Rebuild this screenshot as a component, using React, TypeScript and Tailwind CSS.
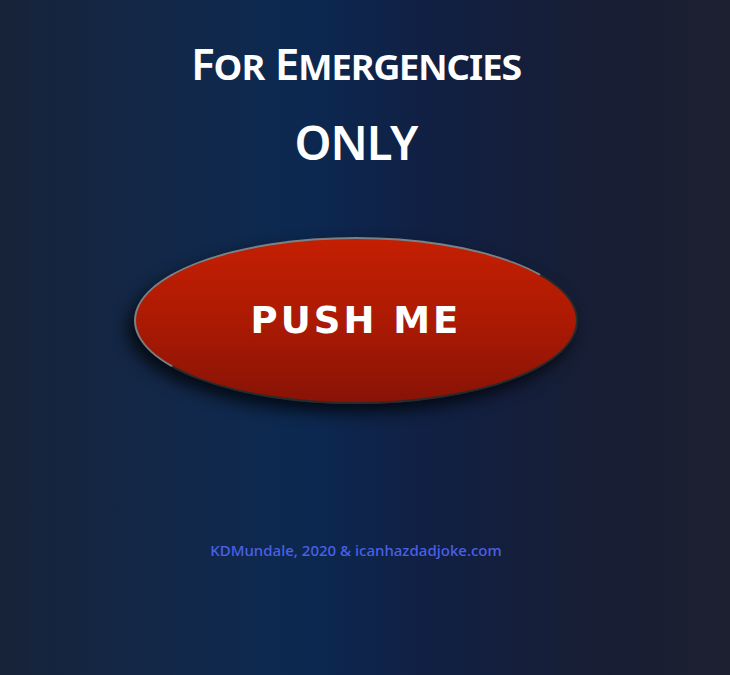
export default function App() {
  return (
    <div
      className="min-h-[675px] w-full pr-[18px] flex flex-col items-center bg-[linear-gradient(90deg,#172339_0%,#12284a_25%,#0c2850_42%,#111f42_60%,#171e35_80%,#1c2031_100%)]"
      style={{ fontFamily: '"Noto Sans", "Open Sans", sans-serif' }}
    >
      <h1 className="mt-[33px] text-[44px] leading-[60px] font-semibold text-white [font-variant:small-caps] tracking-[-1px]">
        For Emergencies
      </h1>
      <h2 className="mt-[19px] text-[47px] leading-[60px] font-semibold text-white tracking-[-1px]">ONLY</h2>
      <button className="mt-[65px] w-[444px] h-[167px] rounded-[50%] border-2 border-t-[#7a8184] border-l-[#7a8184] border-r-[#2b2b2b] border-b-[#2b2b2b] bg-[linear-gradient(180deg,#c41f02_0%,#ac1a03_50%,#881306_100%)] shadow-[-6px_8px_16px_rgba(0,0,0,0.75)] flex items-center justify-center">
        <span
          className="text-white text-[37px] font-bold tracking-[3px] leading-none"
          style={{ fontFamily: '"DejaVu Sans", sans-serif' }}
        >
          PUSH ME
        </span>
      </button>
      <p className="mt-[135px] text-[15px] font-medium text-[#4a60e8]">
        KDMundale, 2020 &amp; icanhazdadjoke.com
      </p>
    </div>
  );
}
